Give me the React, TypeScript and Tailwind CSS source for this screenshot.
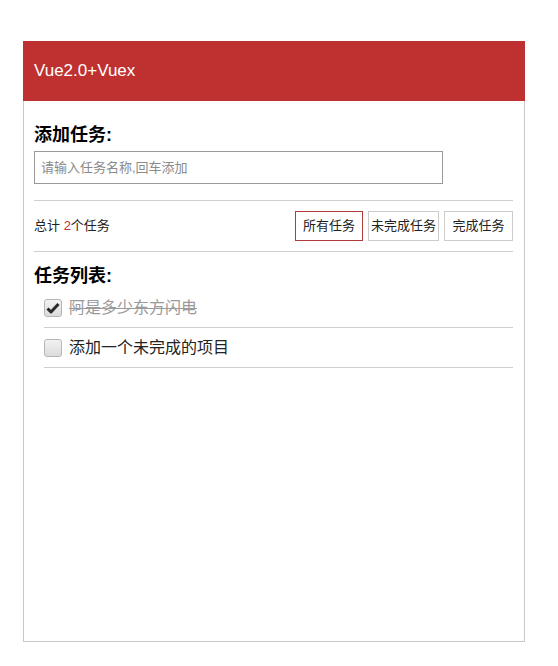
import React, { useState } from "react";

type Todo = { id: number; text: string; done: boolean };

const font = { fontFamily: '"Liberation Sans", "Noto Sans CJK SC", sans-serif' };

function Check({ checked, onClick }: { checked: boolean; onClick: () => void }) {
  return (
    <button
      onClick={onClick}
      className="w-[18px] h-[18px] rounded-[3px] border border-[#b5b5b5] bg-gradient-to-b from-[#f2f2f2] to-[#dcdcdc] flex items-center justify-center shrink-0"
    >
      {checked && (
        <svg width="14" height="12" viewBox="0 0 14 12">
          <path d="M1.5 6.5 L5 10 L12.5 2" fill="none" stroke="#2a2a2a" strokeWidth="3" strokeLinejoin="round" />
        </svg>
      )}
    </button>
  );
}

export default function App() {
  const [todos, setTodos] = useState<Todo[]>([
    { id: 1, text: "阿是多少东方闪电", done: true },
    { id: 2, text: "添加一个未完成的项目", done: false },
  ]);
  const [filter, setFilter] = useState<"all" | "todo" | "done">("all");

  const toggle = (id: number) =>
    setTodos(todos.map((t) => (t.id === id ? { ...t, done: !t.done } : t)));

  const shown = todos.filter((t) => (filter === "all" ? true : filter === "done" ? t.done : !t.done));

  const tabs: { key: "all" | "todo" | "done"; label: string; w: string }[] = [
    { key: "all", label: "所有任务", w: "w-[68px]" },
    { key: "todo", label: "未完成任务", w: "w-[71px]" },
    { key: "done", label: "完成任务", w: "w-[69px]" },
  ];

  return (
    <div className="bg-white min-h-[666px] pt-[41px] pl-[23px]" style={font}>
      <div className="w-[502px]">
        {/* Header */}
        <div className="h-[60px] bg-[#bf3131] flex items-center px-[11px]">
          <span className="text-white text-[17px]">Vue2.0+Vuex</span>
        </div>

        <div className="h-[541px] border border-t-0 border-[#c8c8c8] pt-[22px] pl-[10px] pr-[11px]">
          <h3 className="text-[18px] font-bold leading-[24px] text-black">添加任务:</h3>
          <input
            className="mt-[4px] h-[33px] w-[409px] border border-[#9a9a9a] px-[6px] text-[13px] text-[#333] outline-none placeholder:text-[#8a8a8a]"
            placeholder="请输入任务名称,回车添加"
            style={font}
          />
          <div className="mt-[16px] border-t border-[#cfcfcf]" />

          <div className="mt-[10px] h-[30px] flex items-center justify-between">
            <span className="text-[13px] text-[#222]">
              总计 <span className="text-[#bf3131]">2</span>个任务
            </span>
            <div className="flex gap-[5px] h-[30px]">
              {tabs.map((t) => (
                <button
                  key={t.key}
                  onClick={() => setFilter(t.key)}
                  className={`${t.w} h-[30px] border text-[13px] text-[#222] bg-white ${
                    filter === t.key ? "border-[#b03a3a]" : "border-[#cccccc]"
                  }`}
                >
                  {t.label}
                </button>
              ))}
            </div>
          </div>
          <div className="mt-[10px] border-t border-[#cfcfcf]" />

          <h3 className="mt-[12px] text-[18px] font-bold leading-[24px] text-black">任务列表:</h3>
          <ul className="ml-[10px]">
            {shown.map((t) => (
              <li key={t.id} className="h-[40px] border-b border-[#cfcfcf] flex items-center gap-[7px]">
                <Check checked={t.done} onClick={() => toggle(t.id)} />
                <span className={`text-[16px] ${t.done ? "line-through text-[#9a9a9a]" : "text-[#222]"}`}>{t.text}</span>
              </li>
            ))}
          </ul>
        </div>
      </div>
    </div>
  );
}
